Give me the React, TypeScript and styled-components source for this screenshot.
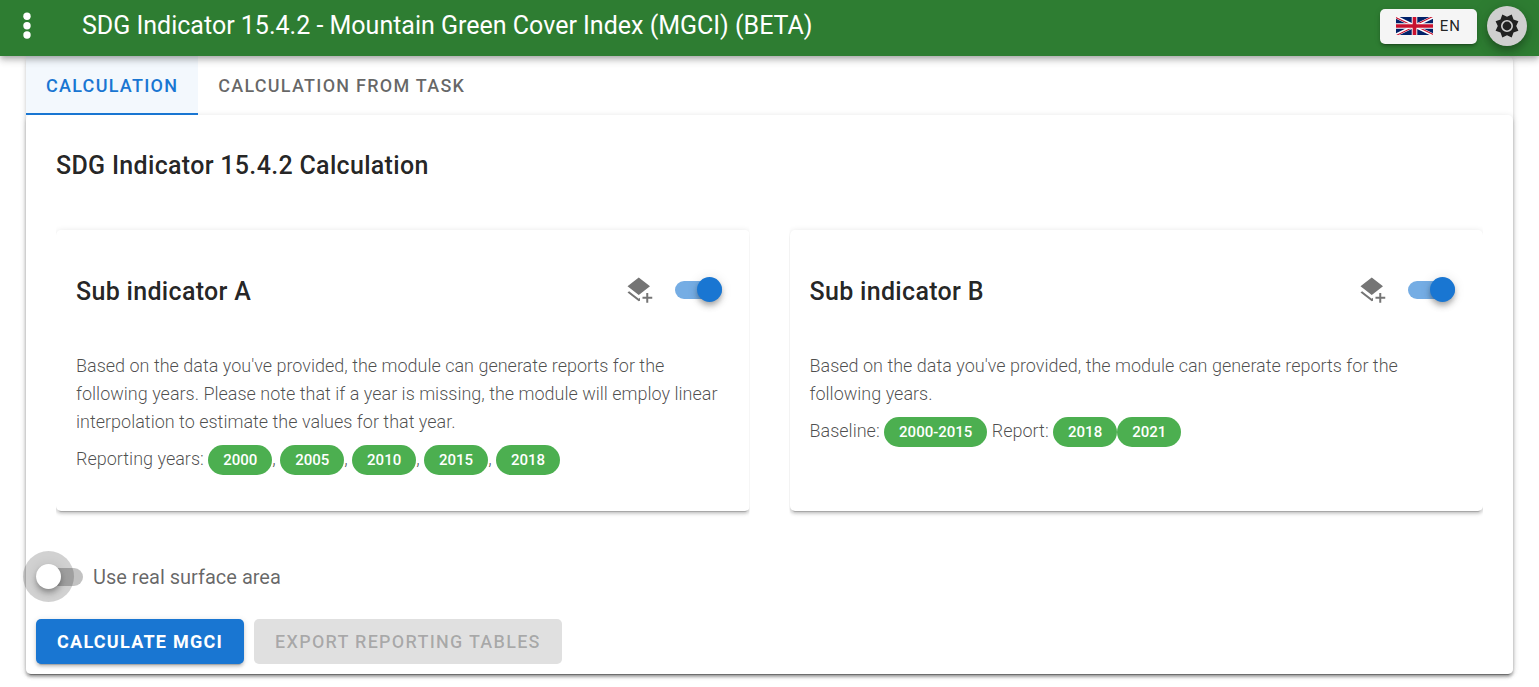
import React, { useState } from "react";
import styled, { createGlobalStyle } from "styled-components";

const colors = {
  primary: "#1976d2",
  green: "#2e7d32",
  chip: "#4caf50",
  text: "rgba(0, 0, 0, 0.87)",
  muted: "rgba(0, 0, 0, 0.6)",
  body: "rgba(0, 0, 0, 0.7)",
};

const elevation =
  "0 4px 1px -3px rgba(0,0,0,.2), 0 3px 3px 0 rgba(0,0,0,.14), 0 1px 6px 0 rgba(0,0,0,.12)";

const GlobalStyle = createGlobalStyle`
  *, *::before, *::after { box-sizing: border-box; }
  body {
    margin: 0;
    background: #fff;
    color: ${colors.text};
    font-family: Roboto, sans-serif;
    font-size: 20px;
    line-height: 30px;
  }
  h1, h2, h3, p { margin: 0; }
  button { font-family: inherit; cursor: pointer; }
`;

const AppBar = styled.header`
  position: relative;
  z-index: 2;
  display: flex;
  align-items: center;
  height: 56px;
  padding: 0 12px;
  background: ${colors.green};
  color: #fff;
  box-shadow: 0 2px 5px -1px rgba(0, 0, 0, 0.2), 0 5px 6px 0 rgba(0, 0, 0, 0.14),
    0 1px 12px 0 rgba(0, 0, 0, 0.12);
`;

const MenuButton = styled.button`
  display: flex;
  padding: 0;
  border: 0;
  background: none;
  color: inherit;
  margin-bottom: 4px;
`;

const AppTitle = styled.h1`
  flex: 1;
  margin: 0 0 4px 40px;
  font-size: 25px;
  font-weight: 400;
  line-height: 38px;
  white-space: nowrap;
`;

const BarActions = styled.div`
  display: flex;
  align-items: center;
  gap: 10px;
  margin-bottom: 4px;
`;

const LanguageButton = styled.button`
  display: flex;
  align-items: center;
  gap: 7px;
  height: 35px;
  padding: 0 16px;
  border: 0;
  border-radius: 5px;
  background: #f5f5f5;
  color: ${colors.text};
  font-size: 15px;
  font-weight: 400;
  letter-spacing: 0.07em;
  box-shadow: ${elevation};
`;

const ThemeButton = styled.button`
  display: flex;
  align-items: center;
  justify-content: center;
  width: 40px;
  height: 40px;
  padding: 0;
  border: 0;
  border-radius: 50%;
  background: #cfcfcf;
  color: #212121;
  box-shadow: 0 4px 6px -1px rgba(0, 0, 0, 0.2), 0 7px 12px 0 rgba(0, 0, 0, 0.14),
    0 1px 20px 0 rgba(0, 0, 0, 0.12);
`;

const Page = styled.main`
  margin: 0 26px 12px;
  border-radius: 5px;
  box-shadow: ${elevation};
`;

const Tabs = styled.div`
  display: flex;
  height: 59px;
`;

const Tab = styled.button<{ $active?: boolean }>`
  padding: 2px 20px 0;
  border: 0;
  border-bottom: 2px solid ${(p) => (p.$active ? colors.primary : "transparent")};
  background: ${(p) => (p.$active ? "#f3f8fd" : "transparent")};
  color: ${(p) => (p.$active ? colors.primary : colors.muted)};
  font-size: 18px;
  font-weight: 500;
  letter-spacing: 0.07em;
  text-transform: uppercase;
`;

const Panel = styled.section`
  padding: 31px 10px 10px;
  border-radius: 5px;
  background: #fff;
  box-shadow: ${elevation};
`;

const PanelTitle = styled.h2`
  padding: 0 20px;
  font-size: 25px;
  font-weight: 500;
  line-height: 40px;
  letter-spacing: 0.0125em;
`;

const CardGrid = styled.div`
  display: grid;
  grid-template-columns: 1fr 1fr;
  gap: 40px;
  margin: 44px 20px 40px;
`;

const Card = styled.article`
  padding: 20px;
  border-radius: 5px;
  background: #fff;
  box-shadow: ${elevation};
  clip-path: inset(-10px 0);
`;

const CardHeader = styled.div`
  display: flex;
  align-items: center;
  height: 80px;
  margin-bottom: 22px;
  padding-right: 8px;
`;

const CardTitle = styled.h3`
  flex: 1;
  padding-top: 4px;
  font-size: 25px;
  font-weight: 500;
  line-height: 40px;
  letter-spacing: 0.0125em;
`;

const IconButton = styled.button`
  display: flex;
  padding: 0;
  margin-right: 20px;
  border: 0;
  background: none;
  color: #757575;
`;

const CardBody = styled.div`
  min-height: 139px;
  color: ${colors.body};
  font-size: 18px;
  font-weight: 300;
  line-height: 28px;
`;

const Years = styled.p`
  display: flex;
  align-items: center;
  margin-top: 7px;
  white-space: pre;
`;

const Chip = styled.span`
  height: 30px;
  margin-top: 2px;
  padding: 0 15px;
  border-radius: 15px;
  background: ${colors.chip};
  color: #fff;
  font-size: 15px;
  font-weight: 500;
  line-height: 30px;
`;

const SwitchRoot = styled.span`
  position: relative;
  display: flex;
  align-items: center;
  width: 47px;
  height: 30px;
`;

const SwitchInput = styled.input`
  position: absolute;
  inset: 0;
  z-index: 1;
  width: 100%;
  height: 100%;
  margin: 0;
  opacity: 0;
  cursor: pointer;
`;

const Track = styled.span<{ $on: boolean }>`
  flex: 1;
  height: 18px;
  border-radius: 9px;
  background: ${(p) => (p.$on ? "rgba(25, 118, 210, 0.6)" : "rgba(0, 0, 0, 0.24)")};
`;

const Thumb = styled.span<{ $on: boolean; $halo?: boolean }>`
  position: absolute;
  top: 2px;
  ${(p) => (p.$on ? "right: 0;" : "left: 0;")}
  width: 25px;
  height: 25px;
  border-radius: 50%;
  background: ${(p) => (p.$on ? colors.primary : "#fff")};
  box-shadow: 0 3px 5px -1px rgba(0, 0, 0, 0.2), 0 5px 6px 0 rgba(0, 0, 0, 0.14),
    0 1px 12px 0 rgba(0, 0, 0, 0.12)${(p) => (p.$halo ? ", 0 0 0 13px rgba(0, 0, 0, 0.18)" : "")};
`;

const SwitchRow = styled.label`
  display: flex;
  align-items: center;
  gap: 10px;
  height: 51px;
  color: ${colors.muted};
  font-size: 20px;
  font-weight: 400;
`;

const Actions = styled.div`
  display: flex;
  gap: 10px;
  margin-top: 17px;
`;

const ActionButton = styled.button`
  height: 45px;
  padding: 0 21px;
  border: 0;
  border-radius: 5px;
  background: ${colors.primary};
  color: #fff;
  font-size: 18px;
  font-weight: 700;
  letter-spacing: 0.07em;
  text-transform: uppercase;
  box-shadow: ${elevation};

  &:disabled {
    background: #e0e0e0;
    color: rgba(0, 0, 0, 0.26);
    font-weight: 500;
    box-shadow: none;
    cursor: default;
  }
`;

const DotsIcon = () => (
  <svg width="30" height="30" viewBox="0 0 30 30" fill="currentColor" aria-hidden="true">
    <circle cx="15" cy="5.300" r="3.700" />
    <circle cx="15" cy="14.700" r="3.700" />
    <circle cx="15" cy="24" r="3.700" />
  </svg>
);

const FlagIcon = () => (
  <svg width="37" height="18" viewBox="0 0 60 30" preserveAspectRatio="none" aria-hidden="true">
    <clipPath id="flag-frame">
      <path d="M0,0v30h60v-30z" />
    </clipPath>
    <clipPath id="flag-triangles">
      <path d="M30,15h30v15zv15h-30zh-30v-15zv-15h30z" />
    </clipPath>
    <g clipPath="url(#flag-frame)">
      <path d="M0,0v30h60v-30z" fill="#012169" />
      <path d="M0,0L60,30M60,0L0,30" stroke="#fff" strokeWidth="5" />
      <path d="M0,0L60,30M60,0L0,30" clipPath="url(#flag-triangles)" stroke="#c8102e" strokeWidth="3.500" />
      <path d="M30,0v30M0,15h60" stroke="#fff" strokeWidth="9" />
      <path d="M30,0v30M0,15h60" stroke="#c8102e" strokeWidth="6" />
    </g>
  </svg>
);

const SunIcon = () => (
  <svg width="30" height="30" viewBox="-15 -15 30 30" fill="currentColor" aria-hidden="true">
    <path
      fillRule="evenodd"
      d="M9.200,0L11.400,4.700L6.500,6.500L4.700,11.400L0,9.200L-4.700,11.400L-6.500,6.500L-11.400,4.700L-9.200,0L-11.400,-4.700L-6.500,-6.500L-4.700,-11.400L0,-9.200L4.700,-11.400L6.500,-6.500L11.400,-4.700ZM6,0A6,6 0 1,0 -6,0A6,6 0 1,0 6,0Z"
    />
    <circle r="4.400" />
  </svg>
);

const LayersPlusIcon = () => (
  <svg width="30" height="30" viewBox="0 0 24 24" fill="currentColor" aria-hidden="true">
    <path d="M17,14.400H18.600V17.400H21.800V19H18.600V22.200H17V19H14V17.400H17V14.400M11,16L2,9L11,2L20,9L11,16M11,18.900L12,18.100V20.500L11,21L2,14L3.300,13L11,18.900Z" />
  </svg>
);

function Switch({ initial, halo, label }: { initial: boolean; halo?: boolean; label?: string }) {
  const [on, setOn] = useState(initial);
  return (
    <SwitchRoot>
      <SwitchInput
        type="checkbox"
        role="switch"
        aria-label={label}
        checked={on}
        onChange={(e) => setOn(e.target.checked)}
      />
      <Track $on={on} />
      <Thumb $on={on} $halo={halo} />
    </SwitchRoot>
  );
}

function IndicatorCard({ title, children }: { title: string; children: React.ReactNode }) {
  return (
    <Card>
      <CardHeader>
        <CardTitle>{title}</CardTitle>
        <IconButton type="button" aria-label={`Add ${title} layers`}>
          <LayersPlusIcon />
        </IconButton>
        <Switch initial label={title} />
      </CardHeader>
      <CardBody>{children}</CardBody>
    </Card>
  );
}

const reportingYears = ["2000", "2005", "2010", "2015", "2018"];

export default function App() {
  return (
    <>
      <GlobalStyle />
      <AppBar>
        <MenuButton type="button" aria-label="Menu">
          <DotsIcon />
        </MenuButton>
        <AppTitle>SDG Indicator 15.4.2 - Mountain Green Cover Index (MGCI) (BETA)</AppTitle>
        <BarActions>
          <LanguageButton type="button">
            <FlagIcon />
            EN
          </LanguageButton>
          <ThemeButton type="button" aria-label="Toggle theme">
            <SunIcon />
          </ThemeButton>
        </BarActions>
      </AppBar>
      <Page>
        <Tabs role="tablist">
          <Tab type="button" role="tab" aria-selected="true" $active>
            Calculation
          </Tab>
          <Tab type="button" role="tab" aria-selected="false">
            Calculation from task
          </Tab>
        </Tabs>
        <Panel>
          <PanelTitle>SDG Indicator 15.4.2 Calculation</PanelTitle>
          <CardGrid>
            <IndicatorCard title="Sub indicator A">
              <p>
                Based on the data you've provided, the module can generate reports for the following
                years. Please note that if a year is missing, the module will employ linear
                interpolation to estimate the values for that year.
              </p>
              <Years>
                {"Reporting years: "}
                {reportingYears.map((year, i) => (
                  <React.Fragment key={year}>
                    {i > 0 && ", "}
                    <Chip>{year}</Chip>
                  </React.Fragment>
                ))}
              </Years>
            </IndicatorCard>
            <IndicatorCard title="Sub indicator B">
              <p>
                Based on the data you've provided, the module can generate reports for the following
                years.
              </p>
              <Years>
                {"Baseline: "}
                <Chip>2000-2015</Chip>
                {" Report: "}
                <Chip>2018</Chip>
                <Chip>2021</Chip>
              </Years>
            </IndicatorCard>
          </CardGrid>
          <SwitchRow>
            <Switch initial={false} halo />
            Use real surface area
          </SwitchRow>
          <Actions>
            <ActionButton type="button">Calculate MGCI</ActionButton>
            <ActionButton type="button" disabled>
              Export reporting tables
            </ActionButton>
          </Actions>
        </Panel>
      </Page>
    </>
  );
}
